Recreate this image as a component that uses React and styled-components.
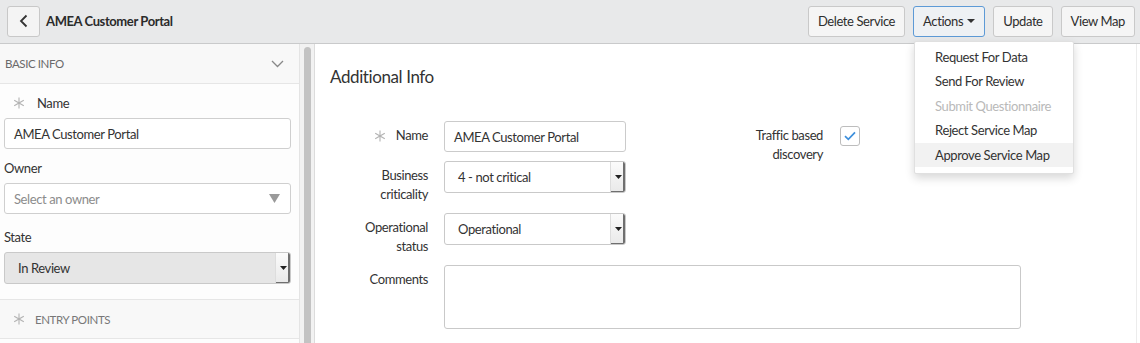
import React from 'react'
import styled, { createGlobalStyle } from 'styled-components'

const GlobalStyle = createGlobalStyle`
  html, body {
    margin: 0;
    padding: 0;
    background: #fff;
    overflow: hidden;
  }
  body {
    font-family: Lato, "Open Sans", sans-serif;
    font-size: 13px;
    letter-spacing: -0.4px;
    color: #333;
  }
  * { box-sizing: border-box; }
`

const menuItems = [
  { label: 'Request For Data' },
  { label: 'Send For Review' },
  { label: 'Submit Questionnaire', disabled: true },
  { label: 'Reject Service Map' },
  { label: 'Approve Service Map', active: true },
]

function Asterisk({ size = 12 }) {
  return (
    <svg width={size} height={size} viewBox="0 0 12 12" fill="none" stroke="#b3b3b3" strokeWidth="1.1">
      <path d="M6 0.5 V11.5 M1.2 3.2 L10.8 8.8 M1.2 8.8 L10.8 3.2" />
    </svg>
  )
}

function SelectArrow() {
  return (
    <svg width="7" height="4" viewBox="0 0 7 4">
      <path d="M0 0 H7 L3.5 4 Z" fill="#222" />
    </svg>
  )
}

function App() {
  return (
    <Page>
      <GlobalStyle />
      <Header>
        <BackButton aria-label="Back">
          <svg width="10" height="14" viewBox="0 0 10 14" fill="none" stroke="#333" strokeWidth="1.8">
            <path d="M7.5 1.5 L2 7 L7.5 12.5" />
          </svg>
        </BackButton>
        <Title>AMEA Customer Portal</Title>
        <Toolbar>
          <Button>Delete Service</Button>
          <MenuAnchor>
            <Button $open>
              Actions <Caret />
            </Button>
            <Menu>
              {menuItems.map((item) => (
                <MenuItem key={item.label} $disabled={item.disabled} $active={item.active}>
                  {item.label}
                </MenuItem>
              ))}
            </Menu>
          </MenuAnchor>
          <Button>Update</Button>
          <Button>View Map</Button>
        </Toolbar>
      </Header>

      <Body>
        <Sidebar>
          <SectionHeader>
            <span>BASIC INFO</span>
            <svg width="13" height="8" viewBox="0 0 13 8" fill="none" stroke="#888" strokeWidth="1.3">
              <path d="M1 1 L6.5 6.5 L12 1" />
            </svg>
          </SectionHeader>
          <Fields>
            <Field>
              <FieldLabel $required>
                <Asterisk />
                Name
              </FieldLabel>
              <TextInput>AMEA Customer Portal</TextInput>
            </Field>
            <Field>
              <FieldLabel>Owner</FieldLabel>
              <TextInput $placeholder>
                Select an owner
                <svg width="11" height="9" viewBox="0 0 11 9">
                  <path d="M0 0 H11 L5.5 9 Z" fill="#9a9a9a" />
                </svg>
              </TextInput>
            </Field>
            <Field $spaced>
              <FieldLabel>State</FieldLabel>
              <Select $grey>
                <SelectValue>In Review</SelectValue>
                <SelectButton><SelectArrow /></SelectButton>
              </Select>
            </Field>
          </Fields>
          <SectionHeader $muted>
            <span>
              <Asterisk />
              ENTRY POINTS
            </span>
          </SectionHeader>
        </Sidebar>

        <ScrollTrack>
          <ScrollThumb />
        </ScrollTrack>

        <Main>
          <Heading>Additional Info</Heading>
          <Form>
            <Label>
              <Asterisk />
              Name
            </Label>
            <Input>AMEA Customer Portal</Input>
            <Label $side>
              Traffic based
              <br />
              discovery
            </Label>
            <Checkbox>
              <svg width="12" height="10" viewBox="0 0 12 10" fill="none" stroke="#3d8fdc" strokeWidth="1.7">
                <path d="M1 5.2 L4.3 8.3 L11 1.3" />
              </svg>
            </Checkbox>

            <Label>
              Business
              <br />
              criticality
            </Label>
            <Select>
              <SelectValue>4 - not critical</SelectValue>
              <SelectButton><SelectArrow /></SelectButton>
            </Select>

            <Label>
              Operational
              <br />
              status
            </Label>
            <Select>
              <SelectValue>Operational</SelectValue>
              <SelectButton><SelectArrow /></SelectButton>
            </Select>

            <Label>Comments</Label>
            <TextArea />
          </Form>
        </Main>
      </Body>
    </Page>
  )
}

export default App

const Page = styled.div`
  width: 1140px;
  height: 343px;
  display: flex;
  flex-direction: column;
  overflow: hidden;
`

const Header = styled.div`
  height: 44px;
  flex: none;
  display: flex;
  align-items: center;
  padding: 0 5px 1px 7px;
  background: #e8e9ea;
  border-bottom: 1px solid #c9cacb;
`

const BackButton = styled.button`
  width: 33px;
  height: 31px;
  display: flex;
  align-items: center;
  justify-content: center;
  background: #f4f4f4;
  border: 1px solid #c8c8c8;
  border-radius: 3px;
  padding: 0;
`

const Title = styled.div`
  margin-left: 6px;
  font-size: 13px;
  font-weight: 700;
  color: #2b2b2b;
`

const Toolbar = styled.div`
  margin-left: auto;
  display: flex;
  gap: 8px;
  align-items: center;
`

const Button = styled.button`
  height: 31px;
  padding: 0 9px;
  font-family: inherit;
  font-size: 13px;
  letter-spacing: -0.4px;
  color: #2e2e2e;
  background: ${(p) => (p.$open ? '#eef1f4' : '#f5f5f5')};
  border: 1px solid ${(p) => (p.$open ? '#5d9ad6' : '#c9c9c9')};
  border-radius: 3px;
  display: flex;
  align-items: center;
  gap: 4px;
`

const Caret = styled.span`
  width: 0;
  height: 0;
  border-left: 4px solid transparent;
  border-right: 4px solid transparent;
  border-top: 4px solid #333;
`

const MenuAnchor = styled.div`
  position: relative;
`

const Menu = styled.div`
  position: absolute;
  top: 35px;
  left: 1px;
  width: 160px;
  padding: 3px 0 6px;
  background: #fff;
  border: 1px solid #e0e0e0;
  border-radius: 2px;
  box-shadow: 0 4px 10px rgba(0, 0, 0, 0.16);
  z-index: 5;
`

const MenuItem = styled.div`
  height: 24.5px;
  line-height: 24.5px;
  padding-left: 20px;
  font-size: 13px;
  white-space: nowrap;
  color: ${(p) => (p.$disabled ? '#b9b9b9' : '#333')};
  background: ${(p) => (p.$active ? '#f2f2f2' : 'transparent')};
`

const Body = styled.div`
  flex: 1;
  display: flex;
  min-height: 0;
`

const Sidebar = styled.div`
  width: 300px;
  flex: none;
  background: #fdfdfd;
  border-right: 1px solid #e4e4e4;
`

const SectionHeader = styled.div`
  height: 40px;
  display: flex;
  align-items: center;
  justify-content: space-between;
  padding: 0 15px 0 5px;
  background: #f8f8f8;
  border-bottom: 1px solid #e6e6e6;
  border-top: ${(p) => (p.$muted ? '1px solid #e6e6e6' : 'none')};
  font-size: 11.5px;
  color: ${(p) => (p.$muted ? '#777' : '#6a6a6a')};

  span {
    display: flex;
    align-items: center;
    gap: 10px;
    padding-left: ${(p) => (p.$muted ? '8px' : '0')};
  }
`

const Fields = styled.div`
  display: flex;
  flex-direction: column;
  gap: 9px;
  padding: 9px 8px 15px 4px;
`

const Field = styled.div`
  display: flex;
  flex-direction: column;
  gap: 5px;
  margin-top: ${(p) => (p.$spaced ? '4px' : '0')};
`

const FieldLabel = styled.div`
  height: 20px;
  display: flex;
  align-items: center;
  gap: 12px;
  padding-left: ${(p) => (p.$required ? '9px' : '0')};
  font-size: 13px;
  color: #333;
`

const TextInput = styled.div`
  height: 31px;
  display: flex;
  align-items: center;
  justify-content: space-between;
  padding: 0 10px 0 9px;
  background: #fff;
  border: 1px solid #cfcfcf;
  border-radius: 3px;
  font-size: 13px;
  color: ${(p) => (p.$placeholder ? '#8c8c8c' : '#333')};
`

const Select = styled.div`
  height: 32px;
  display: flex;
  background: ${(p) => (p.$grey ? '#e6e6e6' : '#fff')};
  border: 1px solid #c9c9c9;
  border-radius: 3px;
  overflow: hidden;
`

const SelectValue = styled.div`
  flex: 1;
  display: flex;
  align-items: center;
  padding-left: 13px;
  font-size: 13px;
  color: #333;
`

const SelectButton = styled.div`
  width: 15px;
  display: flex;
  align-items: center;
  justify-content: center;
  background: linear-gradient(#fbfbfb, #e9e9e9);
  border-left: 1px solid #ddd;
  box-shadow: inset -2px -1px 0 #6f6f6f;
`

const ScrollTrack = styled.div`
  width: 15px;
  flex: none;
  padding: 3px 3px 0 4px;
  background: #f2f2f2;
  border-right: 1px solid #dcdcdc;
`

const ScrollThumb = styled.div`
  height: 100%;
  border-radius: 4px 4px 0 0;
  background: #c3c3c3;
`

const Main = styled.div`
  flex: 1;
  padding: 22px 0 0 15px;
  background: #fff;
  border-right: 1px solid #ececec;
  margin-right: 3px;
`

const Heading = styled.div`
  font-size: 17px;
  color: #333;
  line-height: 22px;
  margin-bottom: 33px;
`

const Form = styled.div`
  display: grid;
  grid-template-columns: 98px 182px 181px 20px;
  column-gap: 16px;
  row-gap: 9px;
  align-items: start;
`

const Label = styled.div`
  grid-column: ${(p) => (p.$side ? '3' : '1')};
  grid-row: ${(p) => (p.$side ? '1 / span 2' : 'auto')};
  padding-top: 5px;
  line-height: 19px;
  text-align: right;
  font-size: 13px;
  color: #333;
  display: flex;
  justify-content: flex-end;
  align-items: flex-start;
  gap: 10px;

  svg {
    margin-top: 4px;
  }
`

const Input = styled.div`
  height: 31px;
  display: flex;
  align-items: center;
  padding-left: 9px;
  border: 1px solid #cbcbcb;
  border-radius: 3px;
  font-size: 13px;
  color: #333;
`

const Checkbox = styled.div`
  grid-column: 4;
  grid-row: 1;
  width: 20px;
  height: 20px;
  margin: 5px 0 0 1px;
  display: flex;
  align-items: center;
  justify-content: center;
  border: 1px solid #bdbdbd;
  border-radius: 3px;
`

const TextArea = styled.div`
  grid-column: 2 / -1;
  width: 577px;
  height: 64px;
  border: 1px solid #c9c9c9;
  border-radius: 3px;
`
